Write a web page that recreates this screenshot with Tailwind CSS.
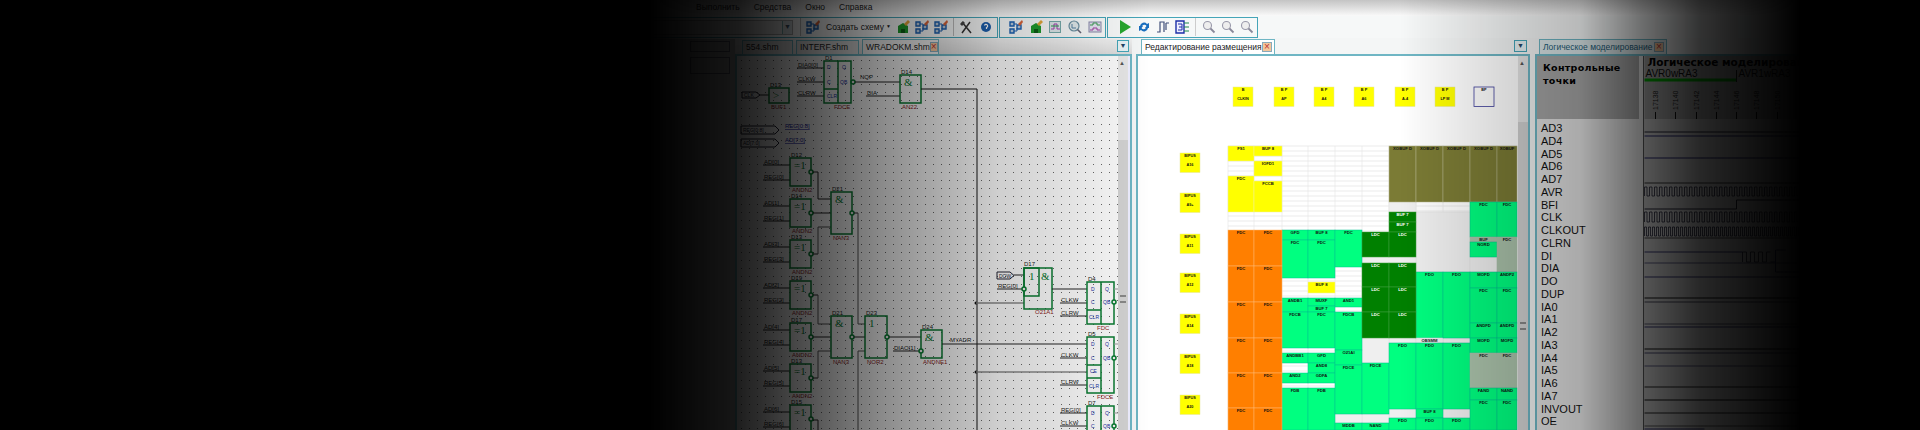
<!DOCTYPE html>
<html lang="ru">

<head>
    <meta charset="UTF-8">
    <title>Редактирование размещения</title>
    <script src="https://cdn.jsdelivr.net/npm/@tailwindcss/browser@4"></script>
</head>

<body class="bg-black">
    <div class="relative h-[430px] w-[1920px] overflow-hidden bg-black font-['Liberation_Sans',sans-serif]">

        <!-- icons used by the toolbars -->
        <svg class="hidden">
            <symbol id="i-net" viewBox="0 0 14 14">
                <path d="M1 2h4v4H1zM1 9h4v4H1zM8 5h4v4H8z" fill="#bcd" stroke="#1a5fb0" stroke-width="1.4" />
                <path d="M5 4h3M5 11h3V8" stroke="#1a5fb0" fill="none" />
                <path d="M9 4l4-4 1 2-3 4z" fill="#d9653a" />
            </symbol>
            <symbol id="i-chip" viewBox="0 0 14 14">
                <path d="M2 6l5-3 5 3v7H2z" fill="#1f9a2c" />
                <path d="M5 9h4v4H5z" fill="#0d5c16" />
                <path d="M8 4l4-4 2 2-4 4z" fill="#e2a53a" />
            </symbol>
            <symbol id="i-doc" viewBox="0 0 14 14">
                <rect x="1.500" y="1.500" width="11" height="11" fill="#dbe6e8" stroke="#7aa" />
                <path d="M3 9h3V4h3v5h3" stroke="#a43fb0" fill="none" />
                <path d="M3 6h8" stroke="#2a9a50" />
            </symbol>
            <symbol id="i-find" viewBox="0 0 14 14">
                <circle cx="6" cy="6" r="5" fill="#dfe8ea" stroke="#6a8fa0" stroke-width="1.200" />
                <path d="M4 4v4h4" stroke="#5580a0" fill="none" />
                <path d="M9.500 9.500l3.500 3.500" stroke="#667" stroke-width="1.600" />
            </symbol>
            <symbol id="i-wave" viewBox="0 0 14 14">
                <rect x="1" y="2" width="12" height="10" fill="#e2e2ee" stroke="#88a" />
                <path d="M2 5h3V3h4v2h3" stroke="#3a9a50" fill="none" />
                <path d="M2 10h3V8h4v2h3" stroke="#a040a0" fill="none" />
            </symbol>
            <symbol id="i-tools" viewBox="0 0 14 14">
                <path d="M3 2l9 11M11 2L3 13" stroke="#333" stroke-width="1.500" />
                <path d="M1 4l3-3 2 2-3 3z" fill="#444" />
            </symbol>
            <symbol id="i-help" viewBox="0 0 14 14">
                <circle cx="7" cy="7" r="5" fill="#1d5fae" />
                <path d="M5.500 5.500a1.600 1.600 0 1 1 2 2V9" stroke="#fff" stroke-width="1.200" fill="none" />
            </symbol>
            <symbol id="i-play" viewBox="0 0 14 14">
                <path d="M2 0l11 7-11 7z" fill="#27a72f" />
            </symbol>
            <symbol id="i-sync" viewBox="0 0 14 14">
                <path d="M3 6a4 4 0 0 1 7-2l2-1v5H8l1.500-2A2.500 2.500 0 0 0 5 6.500z" fill="#1a6fc0" />
                <path d="M11 8a4 4 0 0 1-7 2l-2 1V6h4L4.500 8A2.500 2.500 0 0 0 9 7.500z" fill="#1a6fc0" />
            </symbol>
            <symbol id="i-pulse" viewBox="0 0 14 14">
                <path d="M1 12h3V2h4v10M10 3v7M10 3h3" stroke="#40507a" fill="none" stroke-width="1.200" />
            </symbol>
            <symbol id="i-block" viewBox="0 0 14 14">
                <path d="M1 1h8v12H1z" fill="#eef" stroke="#1c2fa8" stroke-width="1.400" />
                <path d="M3 4h4v3H4m3 0v3H3" stroke="#1c2fa8" fill="none" />
                <path d="M9 3h5M9 7h5M9 11h5" stroke="#1c8a4a" />
            </symbol>
            <symbol id="i-zoom" viewBox="0 0 14 14">
                <circle cx="5.500" cy="5.500" r="4" fill="#eee" stroke="#99a" stroke-width="1.100" />
                <path d="M8.500 8.500l4 4" stroke="#889" stroke-width="1.800" />
            </symbol>
        </svg>

        <div class="flex h-full flex-col blur-[0.5px]">

            <!-- menu -->
            <div class="flex h-[16px] gap-[14px] whitespace-nowrap bg-gradient-to-b from-[#c4c4c4] to-[#fafafa] pl-[696px] text-[8.500px] leading-[14px] text-[#222]">
                <span>Выполнить</span>
                <span>Средства</span>
                <span>Окно</span>
                <span>Справка</span>
            </div>

            <!-- toolbars -->
            <div class="flex h-[22px] items-center gap-px bg-[#f6f8f8] pl-[610px]">
                <div class="flex h-[21px] w-[388px] items-center border border-[#45a5b8] pl-[22px]">
                    <div class="flex h-[15px] w-[160px] justify-end border border-[#aaa] bg-[#e4e4e4]">
                        <span class="flex w-[10px] items-center justify-center border-l border-[#7aa] bg-[#d5dde0] text-[7px] text-[#456]">▼</span>
                    </div>
                    <div class="ml-[7px] h-[18px] w-px bg-[#bbb]"></div>
                    <svg class="ml-[5px] h-[14px] w-[14px]"><use href="#i-net" /></svg>
                    <span class="ml-[6px] whitespace-nowrap text-[8.500px] text-[#222]">Создать схему</span>
                    <span class="ml-[2px] text-[5px] text-[#222]">▼</span>
                    <svg class="ml-[5px] h-[14px] w-[14px]"><use href="#i-chip" /></svg>
                    <svg class="ml-[5px] h-[14px] w-[14px]"><use href="#i-net" /></svg>
                    <svg class="ml-[5px] h-[14px] w-[14px]"><use href="#i-net" /></svg>
                    <div class="ml-[5px] h-[18px] w-px bg-[#bbb]"></div>
                    <svg class="ml-[5px] h-[14px] w-[14px]"><use href="#i-tools" /></svg>
                    <svg class="ml-[6px] h-[14px] w-[14px]"><use href="#i-help" /></svg>
                </div>
                <div class="flex h-[21px] w-[107px] items-center gap-[5.700px] border border-[#45a5b8] pl-[9px]">
                    <svg class="h-[14px] w-[14px]"><use href="#i-net" /></svg>
                    <svg class="h-[14px] w-[14px]"><use href="#i-chip" /></svg>
                    <svg class="h-[14px] w-[14px]"><use href="#i-doc" /></svg>
                    <svg class="h-[14px] w-[14px]"><use href="#i-find" /></svg>
                    <svg class="h-[14px] w-[14px]"><use href="#i-wave" /></svg>
                </div>
                <div class="flex h-[21px] w-[151px] items-center gap-[5px] border border-[#45a5b8] pl-[10px]">
                    <svg class="h-[14px] w-[14px]"><use href="#i-play" /></svg>
                    <svg class="h-[14px] w-[14px]"><use href="#i-sync" /></svg>
                    <svg class="h-[14px] w-[14px]"><use href="#i-pulse" /></svg>
                    <svg class="h-[14px] w-[14px]"><use href="#i-block" /></svg>
                    <div class="mx-[1px] h-[18px] w-px bg-[#ccc]"></div>
                    <svg class="h-[14px] w-[14px]"><use href="#i-zoom" /></svg>
                    <svg class="h-[14px] w-[14px]"><use href="#i-zoom" /></svg>
                    <svg class="h-[14px] w-[14px]"><use href="#i-zoom" /></svg>
                </div>
            </div>

            <!-- panels -->
            <div class="flex min-h-0 flex-1 bg-[#f4f6f6] pt-px">

                <!-- project tree, almost lost in the shade -->
                <div class="flex w-[735px] flex-col gap-[5px] bg-[#bbb] pl-[690px] pt-[2px]">
                    <div class="h-[11px] w-[40px] border border-[#667]"></div>
                    <div class="h-[17px] w-[40px] border border-[#667]"></div>
                </div>

                <!-- schematic -->
                <div class="flex w-[397px] flex-col">
                    <div class="flex h-[15px] items-end whitespace-nowrap bg-gradient-to-b from-[#f0f0f0] to-[#dcdcdc] pl-[7px] text-[8.500px] text-[#222]">
                        <div class="flex h-[14px] w-[51px] items-center border border-b-0 border-[#6fb6c4] bg-[#ddd] pl-[3px]">554.shm</div>
                        <div class="ml-[3px] flex h-[14px] w-[63px] items-center border border-b-0 border-[#6fb6c4] bg-[#ddd] pl-[3px]">INTERF.shm</div>
                        <div class="ml-[3px] flex h-[15px] w-[77px] items-center justify-between border border-b-0 border-[#6fb6c4] bg-[#eee] px-[3px]">
                            <span>WRADOKM.shm</span>
                            <span class="flex h-[10px] w-[10px] items-center justify-center border border-[#8ab] bg-[#f3c69c] text-[10px] leading-none text-[#b33]">×</span>
                        </div>
                        <span class="mb-[2px] ml-[178px] flex h-[12px] w-[12px] items-center justify-center border border-[#45a5b8] bg-[#e8f2f4] text-[7px] text-[#246]">▼</span>
                    </div>
                    <div class="flex min-h-0 flex-1 border-x-2 border-t-2 border-[#6fb6c4]">
                        <svg id="scheme" class="h-full w-[381px] bg-[#fafafa] font-['Liberation_Sans']" viewBox="737 56 381 374"></svg>
                        <div class="relative w-[10px] bg-[#e6e6e6]">
                            <span class="absolute left-[1px] top-[3px] text-[6px] text-[#555]">▲</span>
                            <div class="mt-[84px] flex h-full justify-center bg-[#d2d2d2] pt-[155px]">
                                <div class="h-[8px] w-[6px] border-y-2 border-[#888]"></div>
                            </div>
                        </div>
                        <div class="w-[2px] bg-[#eef]"></div>
                    </div>
                </div>

                <!-- placement -->
                <div class="ml-[4px] flex w-[394px] flex-col">
                    <div class="flex h-[15px] items-end whitespace-nowrap pl-[5px] text-[8.500px] text-[#222]">
                        <div class="flex h-[15px] w-[134px] items-center justify-between border border-b-0 border-[#6fb6c4] bg-white pl-[3px] pr-[2px]">
                            <span>Редактирование размещения</span>
                            <span class="flex h-[10px] w-[10px] items-center justify-center border border-[#8ab] bg-[#f3c69c] text-[10px] leading-none text-[#b33]">×</span>
                        </div>
                        <span class="mb-[2px] ml-[239px] flex h-[12px] w-[13px] items-center justify-center border border-[#45a5b8] bg-[#e8f2f4] text-[7px] text-[#246]">▼</span>
                    </div>
                    <div class="flex min-h-0 flex-1 border-x-2 border-t-2 border-[#6fb6c4]">
                        <svg id="place" class="h-full w-[380px] bg-white font-['Liberation_Sans']" viewBox="1138 56 380 374"></svg>
                        <div class="relative w-[10px] bg-[#e6e6e6]">
                            <span class="absolute left-[1px] top-[3px] text-[6px] text-[#555]">▲</span>
                            <div class="mt-[66px] flex h-full justify-center bg-[#d2d2d2] pt-[200px]">
                                <div class="h-[8px] w-[6px] border-y-2 border-[#888]"></div>
                            </div>
                        </div>
                    </div>
                </div>

                <!-- logic simulation -->
                <div class="ml-[5px] flex min-w-0 flex-1 flex-col">
                    <div class="flex h-[15px] items-end whitespace-nowrap pl-[4px] text-[8.500px]">
                        <div class="flex h-[15px] w-[128px] items-center justify-between border border-b-0 border-[#6fb6c4] bg-[#dce8ea] pl-[3px] pr-[2px] text-[#1d5c78]">
                            <span>Логическое моделирование</span>
                            <span class="flex h-[10px] w-[10px] items-center justify-center border border-[#8ab] bg-[#f3c69c] text-[10px] leading-none text-[#b33]">×</span>
                        </div>
                    </div>
                    <div class="flex min-h-0 flex-1 border-l-2 border-t-2 border-[#6fb6c4]">
                        <div class="w-[106px] bg-[#e4e4e4]">
                            <div class="h-[63px] w-[102px] bg-[#a6a6a6] pl-[6px] pt-[5px] font-['DejaVu_Sans'] text-[9.500px] font-bold leading-[13px] tracking-[0.3px] text-black">Контрольные<br>точки</div>
                            <ul class="bg-[#e4e4e4] pl-[4px] pt-[3px] text-[11px] leading-[12.750px] text-[#111]">
                                <li>AD3</li><li>AD4</li><li>AD5</li><li>AD6</li><li>AD7</li><li>AVR</li><li>BFI</li><li>CLK</li><li>CLKOUT</li><li>CLRN</li><li>DI</li><li>DIA</li><li>DO</li><li>DUP</li><li>IA0</li><li>IA1</li><li>IA2</li><li>IA3</li><li>IA4</li><li>IA5</li><li>IA6</li><li>IA7</li><li>INVOUT</li><li>OE</li>
                            </ul>
                        </div>
                        <div class="w-px bg-[#555]"></div>
                        <svg id="waves" class="h-full flex-1 bg-[#c4c4c4] font-['Liberation_Sans']" viewBox="1644 56 275 374"></svg>
                    </div>
                </div>
            </div>
        </div>

        <!-- the dark fade on both sides -->
        <div class="pointer-events-none absolute inset-0 bg-[linear-gradient(to_right,#000_650px,rgba(0,0,0,.88)_740px,rgba(0,0,0,.7)_800px,rgba(0,0,0,.45)_880px,rgba(0,0,0,.17)_1000px,rgba(0,0,0,0)_1150px,rgba(0,0,0,0)_1400px,rgba(0,0,0,.15)_1500px,rgba(0,0,0,.25)_1580px,rgba(0,0,0,.55)_1640px,rgba(0,0,0,.8)_1700px,rgba(0,0,0,.92)_1760px,#000_1800px)]"></div>
    </div>

    <script>
        const GREEN = '#087a30';
        const txt = (x, y, t, fill = '#222', size = 6, extra = '') =>
            `<text x="${x}" y="${y}" fill="${fill}" font-size="${size}" ${extra}>${t}</text>`;
        const line = (x1, y1, x2, y2, c = '#222', w = 1) =>
            `<line x1="${x1}" y1="${y1}" x2="${x2}" y2="${y2}" stroke="${c}" stroke-width="${w}"/>`;
        const box = (x, y, w, h) =>
            `<rect x="${x}" y="${y}" width="${w}" height="${h}" fill="none" stroke="${GREEN}" stroke-width="1.500"/>`;
        const bub = (x, y) =>
            `<circle cx="${x}" cy="${y}" r="2" fill="#eee" stroke="${GREEN}" stroke-width="1.500"/>`;

        // ------------------ schematic ------------------
        let s = `<defs><pattern id="dots" x="741" y="60" width="8" height="8" patternUnits="userSpaceOnUse"><rect width="1" height="1" fill="#666"/></pattern></defs>
            <rect x="737" y="56" width="381" height="374" fill="url(#dots)"/>`;

        const label = (x1, x2, y, t) => line(x1, y, x2, y) + txt(x1 + 1, y - 1.500, t);
        const gate = (x, y, w, h, sym, name, red) =>
            box(x, y, w, h) + txt(x + 4, y + 11, sym, GREEN, 11, 'font-family="Liberation Serif"') +
            txt(x + 1, y - 1.500, name) + (red ? txt(x + 2, y + h + 5.500, red, '#8a1c1c') : '');
        const pin = (x1, x2, y1, y2) =>
            `<path d="M${x1} ${y1}H${x2 - 4}L${x2} ${(y1 + y2) / 2}L${x2 - 4} ${y2}H${x1}Z" fill="none" stroke="#223" />`;

        // flip-flop with the clear section at the bottom
        function flop(x, y, h, clr, name, red, pins) {
            let o = box(x, y, 27, h) + line(x + 14, y, x + 14, y + h, GREEN, 1.500) + txt(x + 1, y - 1.500, name);
            if (clr) o += line(x, y + h - clr, x + 14, y + h - clr, GREEN, 1.500);
            pins.forEach(p => o += txt(x + p[0], y + p[1], p[2], '#2030a0', 5));
            if (red) o += txt(x + 10, y + h + 5.500, red, '#8a1c1c');
            return o;
        }

        // top row
        s += pin(742, 760, 92, 98) + txt(744, 97, 'CLK', '#223', 5) + line(760, 95, 769, 95);
        s += gate(769, 88, 20, 15, '>', 'D13', 'BUF1');
        s += label(797, 824, 68, 'DIA0[0]') + label(797, 824, 82, 'CLKW') + label(797, 824, 96, 'CLRW');
        s += flop(824, 61, 42, 14, 'D1', 'FDCE', [[3, 8, 'D'], [3, 23, 'C'], [3, 37, 'CLR'], [18, 8, 'Q'], [16, 23, 'QB']]);
        s += bub(853, 82) + line(855, 82, 900, 82) + txt(860, 79, 'NQP') + label(866, 900, 96, 'DIA');
        s += gate(900, 75, 21, 28, '&amp;', 'D14', 'AN22');
        s += line(921, 89, 977, 89, '#111', 1) + line(977, 89, 977, 430, '#111', 1);

        // bus pins
        s += pin(741, 779, 126, 134) + txt(743, 132, 'REG[0:8]', '#223', 5) + txt(785, 128, 'REG[0:8]', '#1a1aa0', 6, 'text-decoration="underline"');
        s += pin(741, 779, 139, 147) + txt(743, 145, 'AD[7:0]', '#223', 5) + txt(785, 142, 'AD[7:0]', '#1a1aa0', 6, 'text-decoration="underline"');

        // xor column
        [[158, 'D12', 0, 'ANDN2'], [199, 'D14', 1, 'ANDN2'], [240, 'D13', 3, 'ANDN2'], [281, 'D19', 2, 'ANDN2'], [323, 'D17', 4, 'ANDN2'], [364, 'D13', 5, 'ANDN2'], [405, 'D15', 6, '']].forEach(r => {
            const [y, name, n, red] = r;
            s += label(763, 790, y + 7, `AD[${n}]`) + label(763, 790, y + 22, `REG[${n}]`);
            s += gate(790, y, 21, 28, '=1', name, red) + bub(811, y + 14);
        });

        // wires from the xors into the nands
        s += line(813, 172, 818, 172) + line(818, 172, 818, 199) + line(818, 199, 831, 199);
        s += line(813, 213, 831, 213) + line(813, 254, 818, 254) + line(818, 254, 818, 227, '#555') + line(818, 227, 831, 227, '#555');
        s += line(813, 295, 818, 295) + line(818, 295, 818, 324, '#555') + line(818, 324, 831, 324, '#555');
        s += line(813, 337, 831, 337) + line(813, 378, 818, 378) + line(818, 378, 818, 351, '#555') + line(818, 351, 831, 351, '#555');
        s += line(813, 420, 818, 420) + line(818, 420, 818, 430);

        s += gate(831, 192, 21, 42, '&amp;', 'D21', 'NAN3') + bub(852, 213);
        s += gate(831, 316, 21, 42, '&amp;', 'D21', 'NAN3') + bub(852, 337);
        s += line(854, 213, 858, 213) + line(858, 213, 858, 324, '#555') + line(858, 324, 865, 324, '#555');
        s += line(858, 351, 858, 430, '#555') + line(858, 351, 865, 351, '#555') + line(854, 337, 865, 337);
        s += gate(865, 316, 22, 42, '1', 'D23', 'NOR2') + bub(887, 337);
        s += line(889, 337, 921, 337) + label(893, 921, 351, 'DIAO[1]');
        s += gate(921, 330, 21, 28, '&amp;', 'D24', 'ANDNE1') + bub(921, 351);
        s += line(942, 344, 1087, 344, '#222') + txt(950, 342, 'MYADR');

        // right hand side
        s += `<circle cx="976" cy="303" r="1.500" fill="#111"/><circle cx="976" cy="372" r="1.500" fill="#111"/>`;
        s += line(976, 303, 1024, 303, '#888', 1.500) + line(976, 372, 1087, 372, '#888', 1.500);
        s += pin(997, 1014, 272, 279) + txt(999, 278, 'DOW', '#223', 5) + line(1014, 275, 1024, 275);
        s += label(997, 1024, 289, 'REG[0]') + box(1024, 268, 28, 41) + box(1024, 268, 15, 28);
        s += txt(1029, 280, '1', GREEN, 11, 'font-family="Liberation Serif"') + txt(1041, 280, '&amp;', GREEN, 11, 'font-family="Liberation Serif"');
        s += txt(1024, 266, 'D17') + txt(1035, 314, 'O21A1', '#8a1c1c') + bub(1024, 289);
        s += line(1052, 289, 1087, 289);

        s += label(1060, 1087, 303, 'CLKW') + label(1060, 1087, 316, 'CLRW');
        s += flop(1087, 282, 42, 14, 'D4', 'FDC', [[4, 9, 'D'], [4, 22, 'C'], [2, 37, 'CLR'], [18, 9, 'Q'], [16, 22, 'QB']]) + bub(1114, 302);
        s += label(1060, 1087, 358, 'CLKW') + label(1060, 1087, 385, 'CLRW');
        s += flop(1087, 337, 56, 15, 'D5', 'FDCE', [[4, 9, 'D'], [4, 23, 'C'], [3, 36, 'CE'], [2, 51, 'CLR'], [18, 9, 'Q'], [16, 23, 'QB']]);
        s += line(1087, 365, 1101, 365, GREEN, 1.500) + bub(1114, 358);
        s += label(1060, 1087, 413, 'REG[0]') + label(1060, 1087, 426, 'CLKW');
        s += flop(1087, 406, 40, 0, 'D7', '', [[4, 9, 'D'], [4, 22, 'C'], [18, 9, 'Q'], [16, 22, 'QB']]) + bub(1114, 426);
        [[289, 1118], [344, 1118], [413, 1118]].forEach(l => s += line(1114, l[0], l[1], l[0], '#999'));
        document.getElementById('scheme').innerHTML = s;

        // ------------------ placement ------------------
        const edges = [1228, 1254, 1282, 1308, 1335, 1362, 1389, 1416, 1443, 1470, 1497, 1517];
        const colors = {
            Y: ['#ffff00', '#f0f0a0', '#111'], L: ['#7b7b35', '#b8b890', '#111'], R: ['#ff7f00', '#ffb870', '#111'],
            G: ['#00ff80', '#00c090', '#111'], D: ['#008000', '#40a040', '#fff'], S: ['#aac2aa', '#aac2aa', '#111'],
            W: ['#efefef', '#ddd', '#111']
        };
        let p = '';

        // empty grid
        for (let y = 146; y < 430; y += 5) p += line(1228, y, 1517, y, '#ddd', 0.600);
        edges.forEach(x => p += line(x, 146, x, 430, '#e4e4e4', 0.600));

        // pads
        const pad = (x, y, a, b, empty) =>
            `<rect x="${x}" y="${y}" width="20" height="19.500" fill="${empty ? '#fff' : '#ffff00'}" stroke="${empty ? '#3a3a9a' : '#e6e6a0'}" stroke-width="${empty ? 0.800 : 0.500}"/>` +
            txt(x + 10, y + 3.500, a, '#111', 3.800, 'text-anchor="middle" font-weight="bold"') +
            txt(x + 10, y + 12.500, b, '#111', 3.800, 'text-anchor="middle" font-weight="bold"');
        [[1233, 'B', 'CLKIN'], [1274, 'B P', 'AP'], [1314, 'B P', 'A4'], [1354, 'B P', 'A6'], [1395, 'B P', 'A-4'], [1435, 'B P', 'LP M']].forEach(b => p += pad(b[0], 87, b[1], b[2]));
        p += pad(1474, 87, 'BP', '', true);
        [[153, 'A16'], [193, 'A9+'], [234, 'A11'], [273, 'A12'], [314, 'A14'], [354, 'A18'], [395, 'A20']].forEach(b => p += pad(1180, b[0], 'BIPUS', b[1]));

        // placed cells: first column, last column, top, bottom, colour, name
        const cells = [
            [7, 8, 212, 272, 'W'], [9, 9, 257, 272, 'W'], [6, 6, 202, 212, 'W'], [6, 6, 338, 343, 'W'], [5, 5, 338, 363, 'W'], [8, 8, 338, 343, 'W'],
            [5, 6, 257, 263, 'W'], [6, 6, 409, 418, 'W'], [8, 8, 409, 418, 'W'], [5, 5, 414, 423, 'W'], [4, 4, 414, 423, 'W'],
            [0, 0, 146, 161, 'Y', 'FS1'], [0, 0, 176, 212, 'Y', 'FDC'], [1, 1, 146, 156, 'Y', 'BUF 8'], [1, 1, 161, 176, 'Y', 'IOFD1'], [1, 1, 181, 212, 'Y', 'FCCB'],
            [3, 3, 282, 293, 'Y', 'BUF 8'],
            [6, 6, 146, 202, 'L', 'XOBUF D'], [7, 7, 146, 202, 'L', 'XOBUF D'], [8, 8, 146, 202, 'L', 'XOBUF D'], [9, 9, 146, 202, 'L', 'XOBUF D'], [10, 10, 146, 202, 'L', 'XOBUF'],
            [6, 6, 212, 222, 'D', 'BUF 7'], [6, 6, 222, 232, 'D', 'BUF 7'],
            [2, 2, 230, 240, 'G', 'GFD'], [2, 2, 240, 278, 'G', 'FDC'], [3, 3, 230, 240, 'G', 'BUF 8'], [3, 3, 240, 278, 'G', 'FDC'], [4, 4, 230, 267, 'G', 'FDC'],
            [2, 2, 298, 312, 'G', 'ANDB1'], [2, 2, 312, 348, 'G', 'FDCB'], [2, 2, 353, 363, 'G', 'ANDBB1'], [2, 2, 373, 383, 'G', 'AND2'], [2, 2, 388, 430, 'G', 'FDB'],
            [3, 3, 298, 306, 'G', 'MUXF'], [3, 3, 306, 312, 'G', 'BUF 7'], [3, 3, 312, 348, 'G', 'FDC'], [3, 3, 353, 363, 'G', 'GFD'], [3, 3, 363, 373, 'G', 'AND8'], [3, 3, 373, 383, 'G', 'GDFA'], [3, 3, 388, 430, 'G', 'FDB'],
            [4, 4, 298, 307, 'G', 'AND1'], [4, 4, 312, 350, 'G', 'FDCB'], [4, 4, 350, 365, 'G', 'O21AI'], [4, 4, 365, 414, 'G', 'FDCE'], [4, 4, 423, 430, 'G', 'MDDB'],
            [5, 5, 363, 414, 'G', 'FDCE'], [5, 5, 423, 430, 'G', 'NAND'],
            [6, 6, 343, 409, 'G', 'FDO'], [6, 6, 418, 430, 'G', 'FDO'],
            [7, 7, 272, 338, 'G', 'FDO'], [7, 7, 338, 343, 'W', 'OBSMM'], [7, 7, 343, 409, 'G', 'FDO'], [7, 7, 409, 418, 'G', 'BUF 8'], [7, 7, 418, 430, 'G', 'FDO'],
            [8, 8, 272, 338, 'G', 'FDO'], [8, 8, 343, 409, 'G', 'FDO'], [8, 8, 418, 430, 'G', 'FDO'],
            [9, 9, 202, 237, 'G', 'FDC'], [9, 9, 237, 242, 'S', 'BUF'], [9, 9, 242, 257, 'G', 'NORD'], [9, 9, 272, 288, 'G', 'MOFD'], [9, 9, 288, 323, 'G', 'FDC'], [9, 9, 323, 338, 'G', 'ANDFD'], [9, 9, 338, 353, 'G', 'MOFD'],
            [9, 9, 353, 388, 'S', 'FDC'], [9, 9, 388, 400, 'G', 'FAND'], [9, 9, 400, 430, 'G', 'FDC'],
            [10, 10, 202, 237, 'G', 'FDC'], [10, 10, 237, 272, 'S', 'FDC'], [10, 10, 272, 288, 'G', 'ANDP2'], [10, 10, 288, 323, 'G', 'FDC'], [10, 10, 323, 338, 'G', 'ANDFD'], [10, 10, 338, 353, 'G', 'MOFD'],
            [10, 10, 353, 388, 'S', 'FDC'], [10, 10, 388, 400, 'G', 'NAND'], [10, 10, 400, 430, 'G', 'FDC']
        ];
        [230, 266, 302, 338, 373, 408].forEach((y, i, all) => {
            [0, 1].forEach(c => cells.push([c, c, y, all[i + 1] || 444, 'R', 'FDC']));
        });
        [[232, 257], [263, 287], [287, 312], [312, 338]].forEach(r => {
            [5, 6].forEach(c => cells.push([c, c, r[0], r[1], 'D', 'LDC']));
        });
        cells.forEach(c => {
            const [a, b, y0, y1, k, name] = c;
            const col = colors[k];
            const x0 = edges[a], w = edges[b + 1] - x0;
            p += `<rect x="${x0}" y="${y0}" width="${w}" height="${y1 - y0}" fill="${col[0]}" stroke="${col[1]}" stroke-width="0.500"/>`;
            if (name) p += txt(x0 + w / 2, y0 + 4.200, name, col[2], 4.200, 'text-anchor="middle" font-weight="bold"');
        });
        document.getElementById('place').innerHTML = p;

        // ------------------ waves ------------------
        let w = `<rect x="1644" y="56" width="275" height="63" fill="#a0a0a0"/>`;
        w += txt(1647, 66, 'Логическое моделирование', '#000', 10.500, 'font-family="DejaVu Sans" font-weight="bold"');
        w += txt(1645, 77, 'AVR0wRA3', '#111', 10) + txt(1738, 77, 'AVR1wRA3', '#111', 10);
        w += line(1644, 80, 1736, 80, '#00a000', 3) + line(1736, 70, 1736, 82, '#222', 1);
        [1655, 1675, 1696, 1716, 1736, 1756, 1777].forEach((x, i) => {
            w += line(x, 112, x, 119, '#111');
            w += `<text transform="translate(${x + 2} 110) rotate(-90)" fill="#222" font-size="7">${17138 + i * 2}</text>`;
        });
        [[132, '#223'], [136, '#226'], [158, '#226'], [183, '#333'], [209, '#223', 1736], [200, '#223', 1920, 1736], [238, '#444'], [252, '#336', 1742], [263, '#557'],
         [277, '#336'], [298, '#111'], [302, '#445'], [324, '#556'], [327, '#336'], [349, '#111'], [353, '#446'], [366, '#557'], [387, '#222'], [400, '#111'], [413, '#222'], [426, '#555'], [429, '#336', 1704]
        ].forEach(l => {
            w += line(l[3] || 1644, l[0], l[2] || 1920, l[0], l[1]);
        });
        w += line(1736, 200, 1736, 209, '#223');
        const clock = (x0, x1, y0, y1, step) => {
            let d = `M${x0} ${y1}`, up = true;
            for (let x = x0; x < x1; x += step) {
                d += `V${up ? y0 : y1}H${x + step}`;
                up = !up;
            }
            return `<path d="${d}" fill="none" stroke="#223" stroke-width="0.800"/>`;
        };
        w += clock(1644, 1900, 187, 196, 2.500) + clock(1644, 1900, 212, 222, 2.500) + clock(1644, 1900, 227, 236, 2);
        w += clock(1742, 1770, 252, 262, 4) + `<path d="M1770 262H1775V250H1785M1775 262V272H1800" fill="none" stroke="#336"/>`;
        document.getElementById('waves').innerHTML = w;
    </script>
</body>

</html>
